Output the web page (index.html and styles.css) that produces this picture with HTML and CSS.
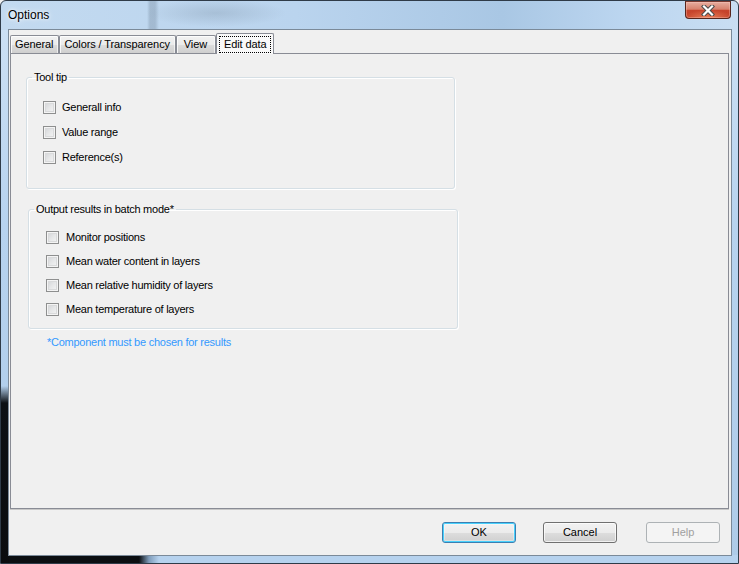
FILE: index.html
```html
<!DOCTYPE html>
<html lang="en">
<head>
<meta charset="utf-8">
<title>Options</title>
<link rel="stylesheet" href="styles.css">
</head>
<body>
<div class="window">
  <div class="titlebar">
    <span class="title">Options</span>
    <button class="close" aria-label="Close">
      <svg width="14" height="11" viewBox="0 0 14 11">
        <path d="M3 1.5 L11 9.5 M11 1.5 L3 9.5" stroke="#4a4a4a" stroke-width="4.2" stroke-linecap="square" fill="none"/>
        <path d="M3 1.5 L11 9.5 M11 1.5 L3 9.5" stroke="#ffffff" stroke-width="2.2" stroke-linecap="square" fill="none"/>
      </svg>
    </button>
  </div>
  <div class="client">
    <div class="tabs">
      <div class="tab">General</div>
      <div class="tab">Colors / Transparency</div>
      <div class="tab">View</div>
      <div class="tab active"><span class="focus">Edit data</span></div>
    </div>
    <div class="panel">
      <fieldset class="group group-tooltip">
        <legend>Tool tip</legend>
        <div class="rows">
          <label class="check"><span class="box"></span>Generall info</label>
          <label class="check"><span class="box"></span>Value range</label>
          <label class="check"><span class="box"></span>Reference(s)</label>
        </div>
      </fieldset>
      <fieldset class="group group-batch">
        <legend>Output results in batch mode*</legend>
        <div class="rows">
          <label class="check"><span class="box"></span>Monitor positions</label>
          <label class="check"><span class="box"></span>Mean water content in layers</label>
          <label class="check"><span class="box"></span>Mean relative humidity of layers</label>
          <label class="check"><span class="box"></span>Mean temperature of layers</label>
        </div>
      </fieldset>
      <p class="note">*Component must be chosen for results</p>
    </div>
    <div class="footer">
      <button class="btn btn-default">OK</button>
      <button class="btn btn-cancel">Cancel</button>
      <button class="btn btn-help" disabled>Help</button>
    </div>
  </div>
</div>
</body>
</html>
```
FILE: styles.css
```css
* { box-sizing: border-box; }
html, body { margin: 0; padding: 0; }
body {
  width: 739px;
  height: 564px;
  overflow: hidden;
  font-family: "Liberation Sans", Arial, sans-serif;
  font-size: 11px;
  color: #000;
  background: #f0f0f0;
}

.window {
  width: 739px;
  height: 564px;
  border: 1px solid #2f3b48;
  border-radius: 6px 6px 0 0;
  padding: 0 6px 7px 7px;
  display: flex;
  flex-direction: column;
  background:
    linear-gradient(to bottom, rgba(0,0,0,0) 0, rgba(0,0,0,0) 385px, #0d1014 402px, #0a0c0f 100%) 0 0 / 8px 100% no-repeat,
    linear-gradient(to right, #0b0e11 0, #0b0e11 138px, #7f9cba 148px, #b6d2ee 158px) 0 100% / 100% 8px no-repeat,
    linear-gradient(to right, rgba(0,0,0,0) 146px, rgba(100,120,140,.3) 149px, rgba(100,120,140,.3) 154px, rgba(0,0,0,0) 158px) 0 0 / 100% 29px no-repeat,
    radial-gradient(ellipse 70px 14px at 215px 12px, rgba(120,140,160,.3), rgba(120,140,160,0)) 0 0 / 100% 29px no-repeat,
    linear-gradient(to right, #c3daf0 0, #bad4ee 40%, #a9c7e4 68%, #bcd6f0 85%, #c9def2 100%) 0 0 / 100% 29px no-repeat,
    linear-gradient(to bottom, #cfe2f5 0, #b7d3ef 40%, #aecbe8 100%);
}

.titlebar {
  height: 28px;
  flex: none;
  display: flex;
  justify-content: space-between;
  align-items: flex-start;
}
.title {
  font-size: 12px;
  line-height: 14px;
  margin-top: 7px;
  color: #000;
  text-shadow: 0 0 6px rgba(255,255,255,.9), 0 0 3px rgba(255,255,255,.9);
}
.close {
  width: 46px;
  height: 18px;
  margin: 0 1px 0 0;
  padding: 0;
  border: 1px solid #57261d;
  border-top-color: #7a3a30;
  border-radius: 0 0 4px 4px;
  display: flex;
  align-items: center;
  justify-content: center;
  background:
    radial-gradient(ellipse 26px 8px at 50% 100%, rgba(240,140,100,.85), rgba(240,140,100,0)),
    linear-gradient(to bottom, #e7ad9f 0, #d7826e 45%, #c7452d 52%, #c13d25 100%);
  box-shadow: inset 0 0 0 1px rgba(255,210,200,.35);
}
.close svg { display: block; }

.client {
  flex: 1;
  border: 1px solid #7b8a99;
  background: #f0f0f0;
  display: flex;
  flex-direction: column;
}

.tabs {
  height: 23px;
  flex: none;
  padding: 3px 0 0 1px;
  display: flex;
  align-items: flex-end;
  position: relative;
  z-index: 1;
  letter-spacing: -0.1px;
}
.tab {
  height: 18px;
  min-width: 40px;
  padding: 0 5px 0 4px;
  border: 1px solid #898c95;
  border-bottom: none;
  border-radius: 2px 2px 0 0;
  line-height: 17px;
  text-align: center;
  background: linear-gradient(to bottom, #f2f2f2 0, #ebebeb 50%, #dddddd 51%, #cfcfcf 100%);
  box-shadow: inset 1px 1px 0 rgba(255,255,255,.8), inset -1px 0 0 rgba(255,255,255,.6);
  white-space: nowrap;
}
.tab.active {
  height: 21px;
  margin-bottom: -1px;
  padding: 2px 2px 0 2px;
  background: #f9f9f9;
  box-shadow: none;
  line-height: 14px;
}
.focus {
  display: block;
  border: 1px dotted #000;
  padding: 0 4px 1px 4px;
}

.panel {
  height: 456px;
  flex: none;
  margin: 0 2px 0 1px;
  border: 1px solid #898c95;
  box-shadow: 0 1px 0 #c8c8c8;
  background: #f0f0f0;
  padding: 0;
  display: flex;
  flex-direction: column;
  align-items: flex-start;
  letter-spacing: -0.25px;
}

.group {
  margin: 0;
  border: 1px solid #d5dfe5;
  border-radius: 3px;
  box-shadow: inset 1px 1px 0 #ffffff, 1px 1px 0 #ffffff;
  padding: 0 0 0 5px;
}
.group legend {
  padding: 0 2px;
  line-height: 13px;
  font-size: 11px;
}
.group-tooltip {
  width: 429px;
  margin: 17px 0 0 15px;
  padding-top: 11px;
  padding-bottom: 18px;
}
.group-tooltip .rows { padding-left: 11px; }
.group-tooltip .check { height: 25px; }

.group-batch {
  width: 430px;
  margin: 14px 0 0 17px;
  padding-top: 9px;
  padding-bottom: 7px;
}
.group-batch .rows { padding-left: 12px; }
.group-batch .check { height: 24px; }

.rows { display: flex; flex-direction: column; }
.check {
  display: flex;
  align-items: center;
  gap: 6px;
  line-height: 13px;
  white-space: nowrap;
}
.group-batch .check { gap: 7px; }
.box {
  width: 13px;
  height: 13px;
  flex: none;
  border: 1px solid #8e8f8f;
  background: linear-gradient(135deg, #cfd1d4 0, #e6e7e8 50%, #f6f6f6 100%);
  box-shadow: inset 0 0 0 1px #f4f4f4, inset 0 0 0 2px #d9dadb;
}

.note {
  margin: 7px 0 0 36px;
  line-height: 13px;
  color: #3399ff;
}

.footer {
  flex: 1;
  display: flex;
  justify-content: flex-end;
  align-items: flex-start;
  padding: 13px 11px 0 0;
}
.btn {
  width: 74px;
  height: 21px;
  padding: 0;
  font-family: "Liberation Sans", Arial, sans-serif;
  font-size: 11px;
  line-height: 19px;
  color: #000;
  border: 1px solid #707070;
  border-radius: 3px;
  background: linear-gradient(to bottom, #f2f2f2 0, #ebebeb 50%, #dddddd 51%, #cfcfcf 100%);
  box-shadow: inset 0 0 0 1px rgba(255,255,255,.7);
}
.btn-default {
  border-color: #3c7fb1;
  box-shadow: inset 0 0 0 1px #48d1fd, inset 0 0 0 2px rgba(255,255,255,.3);
}
.btn-cancel { margin-left: 27px; }
.btn-help {
  margin-left: 29px;
  color: #a0a0a0;
  border-color: #adb2b5;
  background: #f4f4f4;
  box-shadow: none;
}
```
